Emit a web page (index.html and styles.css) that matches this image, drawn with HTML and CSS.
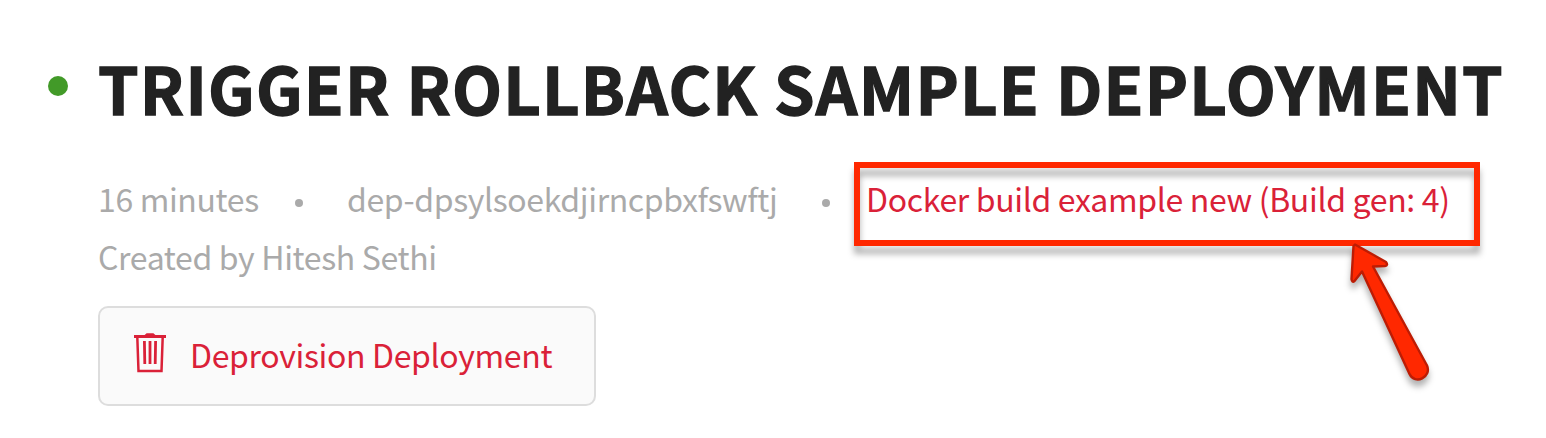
FILE: index.html
```html
<!DOCTYPE html>
<html lang="en">
<head>
<meta charset="utf-8">
<title>Trigger Rollback Sample Deployment</title>
<link rel="stylesheet" href="styles.css">
</head>
<body>
<main class="deployment">
  <header class="heading">
    <span class="status"></span>
    <h1 class="title">TRIGGER ROLLBACK SAMPLE DEPLOYMENT</h1>
  </header>
  <section class="details">
    <div class="meta">
      <span class="age">16 minutes</span>
      <span class="dot"></span>
      <span class="dep-id">dep-dpsylsoekdjirncpbxfswftj</span>
      <span class="dot"></span>
      <a class="build">Docker build example new (Build gen: 4)<span class="highlight"></span></a>
    </div>
    <div class="author">Created by Hitesh Sethi</div>
    <button class="deprovision" type="button">
      <svg class="trash" width="32" height="40" viewBox="0 0 32 40" fill="none" stroke="currentColor">
        <path d="M0 3.500H32" stroke-width="3"/>
        <path d="M11 3L13 1.200H19L21 3" stroke-width="2"/>
        <path d="M3.300 4L4.500 38H27.500L28.700 4" stroke-width="2.500"/>
        <path d="M10.400 8L10.800 31M16 8V31M21.600 8L21.200 31" stroke-width="2.800"/>
      </svg>
      <span class="button-label">Deprovision Deployment</span>
    </button>
  </section>
  <svg class="arrow" width="110" height="170" viewBox="1335 230 110 170">
    <path d="M1355 244.500L1386 262Q1388.500 265.500 1385 266L1373 266.500L1427 365.500C1432 377 1415 385.500 1409.500 374L1362 271.500L1354.500 281Q1352 283 1351.500 279L1353.500 246Z" fill="#ff2800" stroke="#bd1c04" stroke-width="2.400" stroke-linejoin="round"/>
  </svg>
</main>
</body>
</html>
```
FILE: styles.css
```css
body {
  margin: 0;
  background: #fff;
  font-family: "Noto Sans CJK SC", "Noto Sans", sans-serif;
}
.deployment {
  position: relative;
  box-sizing: border-box;
  width: 1546px;
  height: 438px;
  padding: 43px 0 0 48px;
  overflow: hidden;
}
.heading {
  display: flex;
  align-items: center;
  gap: 30px;
  height: 88px;
}
.status {
  flex: none;
  width: 20px;
  height: 20px;
  margin-bottom: 2px;
  border-radius: 50%;
  background: #429a28;
}
.title {
  margin: 0;
  font-size: 65px;
  font-weight: 700;
  line-height: 88px;
  letter-spacing: 1.22px;
  white-space: nowrap;
  color: #222;
  -webkit-text-stroke: 1.3px #222;
}
.details {
  margin: 38px 0 0 50px;
  font-size: 32px;
  line-height: 58px;
  letter-spacing: -0.35px;
  color: #aaa;
  white-space: nowrap;
}
.meta {
  display: flex;
  align-items: center;
}
.age {
  flex: none;
  width: 197px;
}
.dot {
  flex: none;
  width: 8px;
  height: 8px;
  margin-top: 9px;
  border-radius: 50%;
  background: #aaa;
}
.dep-id {
  flex: none;
  width: 519px;
  padding-left: 44px;
  box-sizing: border-box;
  letter-spacing: -0.38px;
}
.build {
  position: relative;
  margin-left: 36px;
  color: #da2138;
  letter-spacing: -0.33px;
}
.highlight {
  position: absolute;
  left: -12px;
  top: -7px;
  box-sizing: border-box;
  width: 626px;
  height: 84px;
  border: 6px solid #ff2800;
  filter: drop-shadow(0 8px 3px rgba(0, 0, 0, 0.3));
}
.deprovision {
  display: flex;
  align-items: center;
  box-sizing: border-box;
  width: 498px;
  height: 100px;
  margin: 21px 0 0;
  padding: 0 0 0 34px;
  border: 2px solid #ddd;
  border-radius: 10px;
  background: #fafafa;
  color: #da2138;
  font: inherit;
  letter-spacing: inherit;
}
.trash {
  flex: none;
  margin-top: -6px;
}
.button-label {
  margin: 0 0 5px 24px;
}
.arrow {
  position: absolute;
  left: 1335px;
  top: 230px;
  filter: drop-shadow(0 6px 3px rgba(0, 0, 0, 0.3));
}
```
